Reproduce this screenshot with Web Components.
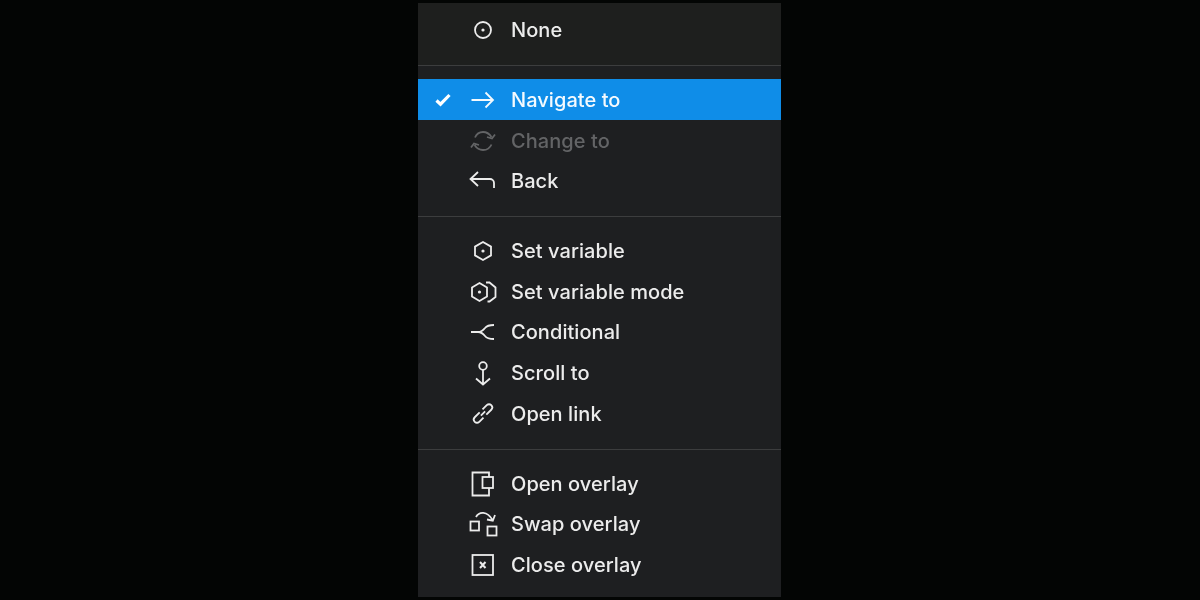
<!DOCTYPE html>
<html>
<head>
<meta charset="utf-8">
<style>
    html, body { margin: 0; height: 100%; background: #030504; }
    body { display: flex; justify-content: center; padding-right: 1px; box-sizing: border-box; font-family: Inter, "Liberation Sans", sans-serif; }
</style>
</head>
<body>
<menu-panel>
    <menu-section top>
        <menu-item icon="none">None</menu-item>
    </menu-section>
    <menu-divider></menu-divider>
    <menu-section>
        <menu-item icon="navigate" selected>Navigate to</menu-item>
        <menu-item icon="change" disabled>Change to</menu-item>
        <menu-item icon="back">Back</menu-item>
    </menu-section>
    <menu-divider></menu-divider>
    <menu-section>
        <menu-item icon="variable">Set variable</menu-item>
        <menu-item icon="mode">Set variable mode</menu-item>
        <menu-item icon="conditional">Conditional</menu-item>
        <menu-item icon="scroll">Scroll to</menu-item>
        <menu-item icon="link">Open link</menu-item>
    </menu-section>
    <menu-divider></menu-divider>
    <menu-section last>
        <menu-item icon="open">Open overlay</menu-item>
        <menu-item icon="swap">Swap overlay</menu-item>
        <menu-item icon="close">Close overlay</menu-item>
    </menu-section>
</menu-panel>

<script>
const ROW_HEIGHT = 40.85;

const ICONS = {
    none: '<circle cx="15" cy="15" r="8"/><circle cx="15" cy="15" r="1.6" fill="currentColor" stroke="none"/>',
    navigate: '<path d="M3.500 15H25M17.500 7.500L25 15l-7.500 7.500"/>',
    change: '<path d="M7 11.500C8.500 8 11.500 6 15 6c3.500 0 6.500 2 8.500 5M27 8.500l-3 4-5-1.500"/><path d="M23.500 18.500C22 22 19 24 15 24c-3.500 0-6.500-2-8.500-5M3 21.500l3-4 5 1.500"/>',
    back: '<path d="M3 13H22c2 0 4 1.500 4 4v5M10 6l-7.500 7L10 20"/>',
    variable: '<path d="M15 6l8 4.600v8.800L15 24l-8-4.600v-8.800z"/><circle cx="15" cy="15" r="1.600" fill="currentColor" stroke="none"/>',
    mode: '<path d="M11.500 6l7.500 4.500v9L11.500 24 4 19.500v-9z"/><circle cx="11.500" cy="15" r="1.600" fill="currentColor" stroke="none"/><path d="M18 5.500h3.500l6 5v9.500l-6 4.500h-2"/>',
    conditional: '<path d="M3 15H10C13 15 15 13.500 17 11 18.500 9 20.500 8 26 8M10 15C13 15 15 16.500 17 19 18.500 21 20.500 22 26 22"/>',
    scroll: '<circle cx="15" cy="8" r="3.800"/><path d="M15 11.800V26.500M8 20.500l7 6 7-6"/>',
    link: '<g transform="translate(15 14.500) rotate(-45)"><path d="M-1.500 -3.200H-8.500a3.200 3.200 0 0 0 0 6.400H-2.500"/><path d="M1.500 3.200H8.500a3.200 3.200 0 0 0 0-6.400H2.500"/><path d="M-3 0H3"/></g>',
    open: '<path d="M21 8V3.500H4.500v23H21V19"/><rect x="14.500" y="8" width="10.500" height="11"/>',
    swap: '<rect x="2.500" y="12.500" width="8.500" height="9"/><rect x="19.500" y="17.500" width="9" height="9"/><path d="M8 8C11 2.500 19 1.500 24.500 11M19 10.500l5.800 1.200L27 6"/>',
    close: '<rect x="4.500" y="5" width="20.500" height="20"/><path d="M12 12l5.500 6M17.500 12L12 18" stroke-width="2"/>'
};

class MenuPanel extends HTMLElement {
    constructor() {
        super();
        this.attachShadow({ mode: "open" });
    }

    connectedCallback() {
        this.shadowRoot.innerHTML = `
            <style>
                :host {
                    display: flex;
                    flex-direction: column;
                    box-sizing: border-box;
                    width: 363px;
                    height: 594px;
                    margin-top: 3px;
                    background-color: #1e1f21;
                    overflow: hidden;
                    filter: blur(0.45px);
                }
            </style>
            <slot></slot>
        `;
    }
}

class MenuSection extends HTMLElement {
    constructor() {
        super();
        this.attachShadow({ mode: "open" });
    }

    connectedCallback() {
        // las filas miden menos de 41px, el resto va al padding para no mover los divisores
        const extra = (41 - ROW_HEIGHT) * this.children.length;
        this.shadowRoot.innerHTML = `
            <style>
                :host {
                    display: flex;
                    flex-direction: column;
                    flex: none;
                    padding: 13px 0 ${14 + extra}px;
                }
                :host([top]) {
                    padding: 6px 0 ${15 + extra}px;
                    background-color: #1e1f1e;
                }
                :host([last]) {
                    padding-bottom: ${11 + extra}px;
                }
            </style>
            <slot></slot>
        `;
    }
}

class MenuDivider extends HTMLElement {
    constructor() {
        super();
        this.attachShadow({ mode: "open" });
    }

    connectedCallback() {
        this.shadowRoot.innerHTML = `
            <style>
                :host {
                    display: block;
                    flex: none;
                    height: 1px;
                    background-color: #3c3d3e;
                }
            </style>
        `;
    }
}

class MenuItem extends HTMLElement {
    constructor() {
        super();
        this.attachShadow({ mode: "open" });
    }

    connectedCallback() {
        const icon = ICONS[this.getAttribute("icon")] || "";
        this.shadowRoot.innerHTML = `
            <style>
                :host {
                    display: flex;
                    align-items: center;
                    box-sizing: border-box;
                    height: ${ROW_HEIGHT}px;
                    padding: 0.6px 0 0 15px;
                    color: #ececec;
                    font-size: 20px;
                    font-weight: 500;
                    letter-spacing: 0.06px;
                }
                :host([selected]) {
                    background-color: #0f8de8;
                    color: #f4fafe;
                }
                :host([disabled]) {
                    color: #636466;
                }
                .check {
                    width: 20px;
                    height: 20px;
                    margin-right: 15px;
                    visibility: hidden;
                }
                :host([selected]) .check {
                    visibility: visible;
                }
                .icon {
                    width: 30px;
                    height: 30px;
                    margin-right: 13px;
                    fill: none;
                    stroke: currentColor;
                    stroke-width: 1.8;
                }
            </style>
            <svg class="check" viewBox="0 0 20 20"><path d="M3.500 10.500l4 3.700L16.500 5" fill="none" stroke="#fff" stroke-width="3.200"/></svg>
            <svg class="icon" viewBox="0 0 30 30">${icon}</svg>
            <slot></slot>
        `;
    }
}

customElements.define("menu-panel", MenuPanel);
customElements.define("menu-section", MenuSection);
customElements.define("menu-divider", MenuDivider);
customElements.define("menu-item", MenuItem);
</script>
</body>
</html>
